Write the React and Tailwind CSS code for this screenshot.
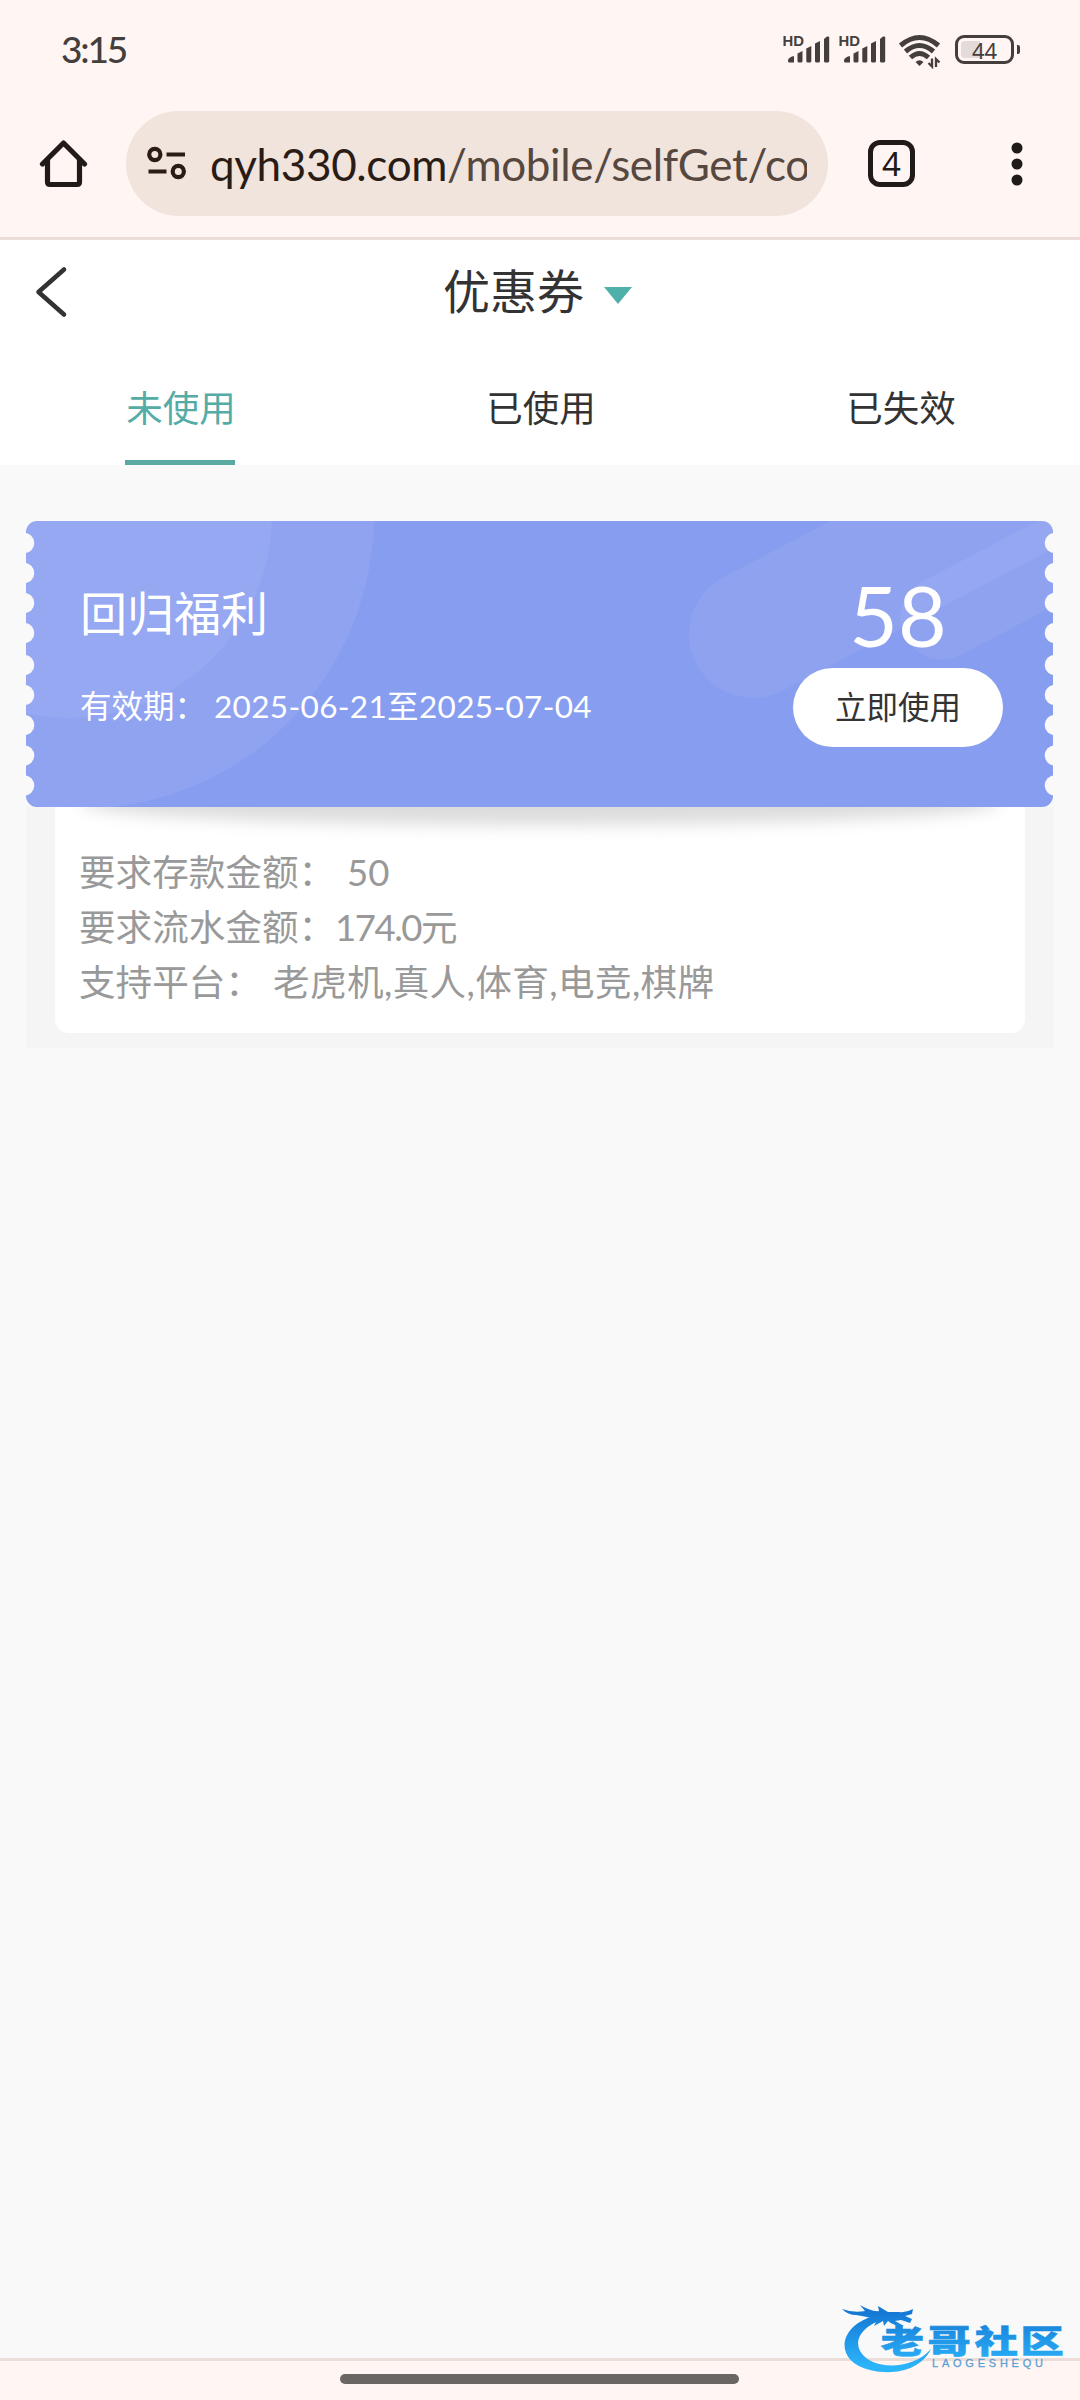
import React, { useState } from 'react';

const TABS = ['未使用', '已使用', '已失效'];

const NOTCHES = [22, 52, 82, 112, 144, 174, 204, 234.5, 264.5];

const coupon = {
  title: '回归福利',
  amount: '58',
  validity: '2025-06-21至2025-07-04',
  deposit: '50',
  turnover: '174.0',
  platforms: '老虎机,真人,体育,电竞,棋牌',
};

const SignalIcon = () => (
  <svg className="overflow-visible" width="48" height="30" viewBox="0 0 48 30" fill="#443e3c">
    <text x="-0.500" y="12" fontSize="14.500" fontWeight="700" textLength="21.500" lengthAdjust="spacingAndGlyphs" className="font-['Liberation_Sans',sans-serif]">HD</text>
    <path d="M5 26.500q0-3 6-4.500V28.500H6.500Q5 28.500 5 27z" />
    <path d="M14.500 19.500l5-2.500v10q0 1.500-1.500 1.500h-2q-1.500 0-1.500-1.500z" />
    <path d="M23.300 14.500l5-2.500v15q0 1.500-1.500 1.500h-2q-1.500 0-1.500-1.500z" />
    <path d="M32 9.500l5-2.500v20q0 1.500-1.500 1.500h-2q-1.500 0-1.500-1.500z" />
    <path d="M41 5l3-2.500h1.200q1 0 1 1v23.500q0 1.500-1.500 1.500h-2.200q-1.500 0-1.500-1.500z" />
  </svg>
);

const WifiIcon = () => (
  <svg width="44" height="36" viewBox="0 0 44 36" fill="none" stroke="#443e3c" strokeWidth="5">
    <path d="M2.500 11.500Q21.500-4.500 40.500 11.500" />
    <path d="M7.500 17.500Q21.500 5.500 35.500 17.500" />
    <path d="M12.500 23.500Q21.500 15.500 30.500 23.500" />
    <path d="M17.500 28q4-3.500 8 0l-4 4z" fill="#443e3c" stroke="none" />
    <path d="M34 24.500v8l-3.500-3.500M38 33v-8l3.500 3.500" strokeWidth="2.300" />
  </svg>
);

const BatteryIcon = () => (
  <div className="flex items-center gap-[3px]">
    <div className="relative flex h-[29px] w-[59px] items-center justify-center rounded-[9px] border-[3px] border-[#443e3c]">
      <span className="absolute left-[3px] top-[3px] h-[17px] w-[19px] rounded-l-[4px] bg-[#e2dbd9]" />
      <span className="relative font-['Noto_Sans',sans-serif] text-[22px] leading-none text-[#443e3c]">44</span>
    </div>
    <span className="h-[9px] w-[3px] rounded-r-[2px] bg-[#443e3c]" />
  </div>
);

const StatusBar = () => (
  <div className="flex h-[98px] items-start justify-between pl-[61px] pr-[60px] pt-[34px]">
    <span className="mt-[-5px] text-[37px] font-medium leading-[40px] tracking-[-2.200px] text-[#443e3c]">3:15</span>
    <div className="flex items-start">
      <SignalIcon />
      <div className="ml-2">
        <SignalIcon />
      </div>
      <div className="ml-[11px]">
        <WifiIcon />
      </div>
      <div className="ml-[13px] mt-[1px]">
        <BatteryIcon />
      </div>
    </div>
  </div>
);

const BrowserBar = () => (
  <div className="flex h-[142px] items-start border-b-[3px] border-[#ecddd8] pt-[13px]">
    <div className="flex h-[105px] w-[126px] items-center pl-[39px]">
      <svg width="49" height="49" viewBox="0 0 49 49" fill="none" stroke="#201a18" strokeWidth="5.200" strokeLinejoin="round" strokeLinecap="round">
        <path d="M3.500 25L24.500 4L45.500 25" />
        <path d="M8.500 21V43q0 2.500 2.500 2.500H38q2.500 0 2.500-2.500V21" />
      </svg>
    </div>

    <div className="flex h-[105px] w-[702px] items-center rounded-full bg-[#f0e4dd] pl-[21px]">
      <svg width="40" height="35" viewBox="0 0 40 35" fill="none" stroke="#2a1c15" strokeWidth="4.200">
        <circle cx="7.800" cy="8.500" r="5.600" />
        <path d="M19.500 8.500h18.500M1.500 25.500h18" />
        <circle cx="31.300" cy="25.500" r="5.600" />
      </svg>
      <div className="ml-[23px] w-[597px] overflow-hidden whitespace-nowrap text-[44px] leading-[60px] tracking-[-0.350px] text-[#2a1c15]">
        qyh330.com<span className="text-[#56473f]">/mobile/selfGet/co</span>
      </div>
    </div>

    <div className="flex h-[105px] flex-1 items-center justify-between pl-10 pr-[57px]">
      <div className="flex h-[47px] w-[47px] items-center justify-center rounded-[12px] border-[5px] border-[#201a18] font-['Noto_Sans',sans-serif] text-[33px] leading-none text-[#201a18]">
        4
      </div>
      <svg width="12" height="46" viewBox="0 0 12 46" fill="#201a18">
        <circle cx="6" cy="7" r="5.500" />
        <circle cx="6" cy="23" r="5.500" />
        <circle cx="6" cy="39" r="5.500" />
      </svg>
    </div>
  </div>
);

const PageHeader = () => (
  <div className="grid h-[112px] grid-cols-[1fr_auto_1fr] items-start bg-white pt-[18px]">
    <svg className="ml-[34px] mt-[7px]" width="34" height="54" viewBox="0 0 34 54" fill="none" stroke="#333" strokeWidth="4.600" strokeLinecap="round" strokeLinejoin="round">
      <path d="M30 4.500L4.500 27L30 49.500" />
    </svg>
    <div className="flex items-center pr-[5px]">
      <h1 className="text-[47px] font-normal leading-[66px] text-[#333]">优惠券</h1>
      <svg className="ml-5 mt-[8px]" width="28" height="17" viewBox="0 0 28 17" fill="#4fb0aa">
        <path d="M0 0h28L14 17z" />
      </svg>
    </div>
  </div>
);

const TabBar = ({ active, onChange }) => (
  <div className="grid h-[113px] grid-cols-3 bg-white">
    {TABS.map((tab, i) => (
      <button key={tab} onClick={() => onChange(i)} className="flex flex-col items-center justify-between pt-[29px]">
        <span className={`pl-[2px] text-[36.500px] leading-[54px] ${i === active ? 'text-[#55aca6]' : 'text-[#333]'}`}>{tab}</span>
        <span className={`h-[5px] w-[110px] ${i === active ? 'bg-[#5ba9a3]' : 'bg-transparent'}`} />
      </button>
    ))}
  </div>
);

// Ticket artwork: perforated edges, big rings on the left, slanted pills on the right
const TicketBackground = () => (
  <svg className="absolute inset-0" width="1027" height="286" viewBox="0 0 1027 286">
    <defs>
      <mask id="ticket">
        <rect width="1027" height="286" rx="11" fill="#fff" />
        {NOTCHES.map((y) => (
          <g key={y} fill="#000">
            <circle cx="-2" cy={y} r="10.300" />
            <circle cx="1029" cy={y} r="10.300" />
          </g>
        ))}
      </mask>
    </defs>
    <g mask="url(#ticket)">
      <rect width="1027" height="286" fill="#879df0" />
      <circle cx="54" cy="-6" r="294" fill="#fff" fillOpacity="0.065" />
      <circle cx="43" cy="-6" r="203" fill="#fff" fillOpacity="0.055" />
      <g stroke="#fff" strokeLinecap="round" strokeOpacity="0.060">
        <path d="M727 113L1081-73" strokeWidth="128" />
        <path d="M916 97L1270-89" strokeWidth="83" />
      </g>
    </g>
  </svg>
);

const CouponCard = ({ data }) => (
  <div className="ml-[26px] w-[1028px] bg-[#f5f5f5] pb-[15px]">
    <div className="relative h-[286px] bg-[#f9f9f9]">
      <TicketBackground />
      <div className="relative flex h-full justify-between pl-[54px] pr-[51px]">
        <div className="pt-[59px] text-white">
          <h2 className="text-[47px] font-normal leading-[66px]">{data.title}</h2>
          <p className="mt-[37px] flex text-[31.500px] leading-[46px]">
            <span className="w-[134px] whitespace-nowrap">有效期：</span>
            <span className="whitespace-nowrap tracking-[0.350px]">{data.validity}</span>
          </p>
        </div>
        <div className="flex w-[210px] flex-col items-center pt-[54px]">
          <span className="text-[84px] leading-[80px] text-white">{data.amount}</span>
          <button className="mt-[13px] h-[79px] w-[210px] rounded-full bg-white pt-px text-[31.500px] text-[#333]">立即使用</button>
        </div>
      </div>
    </div>

    <div className="relative mx-[29px] h-[226px] overflow-hidden rounded-b-[14px] bg-white px-[24px] pt-[38px] text-[36.600px] leading-[55px] text-[#999]">
      <div className="absolute inset-x-6 top-[-26px] h-[44px] rounded-[50%] bg-[#dcdcdc] blur-[8px]" />
      <p className="relative flex">
        <span className="w-[268px] whitespace-nowrap">要求存款金额：</span>
        {data.deposit}
      </p>
      <p className="relative flex">
        <span className="w-[256px] whitespace-nowrap">要求流水金额：</span>
        <span className="tracking-[-1.500px]">{data.turnover}</span>元
      </p>
      <p className="relative flex">
        <span className="w-[194px] whitespace-nowrap">支持平台：</span>
        <span className="tracking-[0.400px]">{data.platforms}</span>
      </p>
    </div>
  </div>
);

const SiteLogo = () => (
  <svg className="absolute bottom-[22px] right-[9px]" width="230" height="78" viewBox="0 0 230 78">
    <defs>
      <linearGradient id="logoBlue" x1="0" y1="0" x2="0" y2="78" gradientUnits="userSpaceOnUse">
        <stop offset="0.150" stopColor="#1478d4" />
        <stop offset="0.850" stopColor="#2cb4fa" />
      </linearGradient>
    </defs>
    <g fill="url(#logoBlue)">
      <path d="M33 16C-4 26-7 62 29 70C53 76 80 70 90 49C75 66 48 69 32 62C9 51 12 28 46 18z" />
      <path d="M1 9Q12 13 24 11L19 5Q31 12 38 11L37 6L47 12L58 12Q65 13 72 9L71 14L64 16L71 19L69 23L60 20L54 21L63 26Q52 26 47 21L43 26L42 21L33 26L36 20L27 23L30 18Q22 16 15 15Q7 15 1 9z" />
      <text y="53" fontSize="32" fontWeight="900" transform="scale(1.35 1)" stroke="url(#logoBlue)" strokeWidth="0.600" x="29.500 64 99 133">老哥社区</text>
    </g>
    <text x="91" y="66.500" fontSize="11" fill="#5b9fd2" stroke="#5b9fd2" strokeWidth="0.300" textLength="111" className="font-['Liberation_Sans',sans-serif]">LAOGESHEQU</text>
  </svg>
);

export default function App() {
  const [activeTab, setActiveTab] = useState(0);

  return (
    <div className="relative flex h-[2400px] w-[1080px] flex-col overflow-hidden bg-[#fff6f4] font-[Lato,'Noto_Sans_CJK_SC',sans-serif]">
      <StatusBar />
      <BrowserBar />
      <PageHeader />
      <TabBar active={activeTab} onChange={setActiveTab} />
      <main className="flex-1 bg-[#f9f9f9] pt-[56px]">
        <CouponCard data={coupon} />
      </main>
      <div className="flex h-[42px] justify-center border-t-[3px] border-[#ecddd8] pr-px pt-[13px]">
        <span className="h-[10px] w-[399px] rounded-full bg-[#6a6663]" />
      </div>
      <SiteLogo />
    </div>
  );
}
